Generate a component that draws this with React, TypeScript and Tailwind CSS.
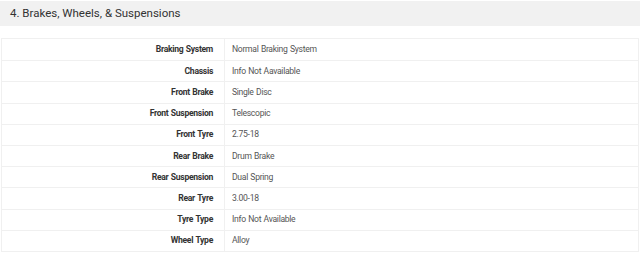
const rows: [string, string][] = [
  ["Braking System", "Normal Braking System"],
  ["Chassis", "Info Not Aavailable"],
  ["Front Brake", "Single Disc"],
  ["Front Suspension", "Telescopic"],
  ["Front Tyre", "2.75-18"],
  ["Rear Brake", "Drum Brake"],
  ["Rear Suspension", "Dual Spring"],
  ["Rear Tyre", "3.00-18"],
  ["Tyre Type", "Info Not Available"],
  ["Wheel Type", "Alloy"],
];

export default function App() {
  return (
    <div className="h-[259px] w-[640px] bg-white pt-px font-['Roboto',sans-serif]">
      <div className="flex h-[25px] items-center bg-[#f1f1f1] px-[10px] text-[11.5px] text-[#333]">
        4. Brakes, Wheels, &amp; Suspensions
      </div>
      <div className="mx-px mt-[12px] border border-[#f0f0f0]">
        {rows.map(([label, value], i) => (
          <div
            key={label}
            className={`flex h-[21.2px] items-center text-[8.6px] tracking-[-0.3px] [word-spacing:0.6px] ${i > 0 ? "border-t border-[#f0f0f0]" : ""}`}
          >
            <div className="flex h-full w-[223px] items-center justify-end border-r border-[#f0f0f0] pr-[11px] font-bold text-[#333]">
              {label}
            </div>
            <div className="pl-[7px] text-[#555]">{value}</div>
          </div>
        ))}
      </div>
    </div>
  );
}
